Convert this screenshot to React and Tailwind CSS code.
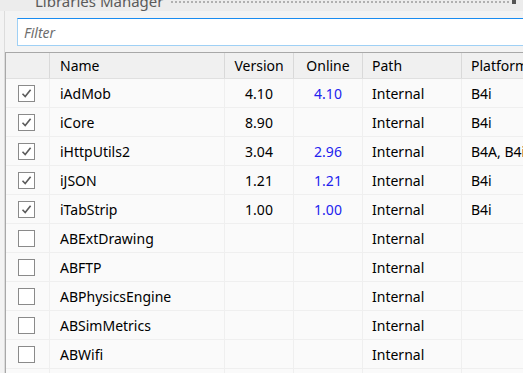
import React from "react";

const rows = [
  { checked: true, name: "iAdMob", version: "4.10", online: "4.10", path: "Internal", platform: "B4i" },
  { checked: true, name: "iCore", version: "8.90", online: "", path: "Internal", platform: "B4i" },
  { checked: true, name: "iHttpUtils2", version: "3.04", online: "2.96", path: "Internal", platform: "B4A, B4i" },
  { checked: true, name: "iJSON", version: "1.21", online: "1.21", path: "Internal", platform: "B4i" },
  { checked: true, name: "iTabStrip", version: "1.00", online: "1.00", path: "Internal", platform: "B4i" },
  { checked: false, name: "ABExtDrawing", version: "", online: "", path: "Internal", platform: "" },
  { checked: false, name: "ABFTP", version: "", online: "", path: "Internal", platform: "" },
  { checked: false, name: "ABPhysicsEngine", version: "", online: "", path: "Internal", platform: "" },
  { checked: false, name: "ABSimMetrics", version: "", online: "", path: "Internal", platform: "" },
  { checked: false, name: "ABWifi", version: "", online: "", path: "Internal", platform: "" },
];

const grid = "grid grid-cols-[44px_175px_69px_69px_99px_1fr]";

function CheckBox({ checked }) {
  return (
    <div className="w-[17px] h-[17px] border border-[#8a8a8a] bg-white flex items-center justify-center">
      {checked && (
        <svg width="13" height="13" viewBox="0 0 13 13">
          <path d="M2.5 6.8 L5.2 9.6 L10.6 2.8" fill="none" stroke="#5c5c5c" strokeWidth="1.6" />
        </svg>
      )}
    </div>
  );
}

export default function App() {
  return (
    <div
      className="w-[523px] h-[373px] overflow-hidden bg-[#f3f3f3] text-[14px] text-black"
      style={{ fontFamily: '"Noto Sans", "Open Sans", sans-serif' }}
    >
      {/* title strip */}
      <div className="h-[11px] bg-[#ececec] flex items-start overflow-hidden relative">
        <div className="ml-[35px] -mt-[9px] text-[#5a5a5a] text-[15px] leading-[20px] whitespace-nowrap">Libraries Manager</div>
        <div className="ml-[8px] mt-[1px] flex-1 border-t-2 border-dotted border-[#b0b0b0] mr-[14px]" />
        <div className="absolute right-[7px] top-0 w-[4px] h-[4px] bg-[#555]" />
      </div>
      {/* content */}
      <div className="ml-[4px] border-l border-[#dcdcdc] h-full">
        <div className="pt-[7px] pl-[12px]">
          <div className="h-[28px] bg-white border-t border-t-[#1a8cf0] border-b border-b-[#9fd0f5] border-l border-l-[#9fd0f5] flex items-center pl-[6px]">
            <span className="italic text-[#6d6d6d]">Filter</span>
          </div>
        </div>
        <div className="mt-[6px] border-l border-[#a8a8a8]">
          {/* header */}
          <div className={`${grid} h-[27px] bg-[#f0f0f0] border-t border-t-[#a8a8a8] border-b border-b-[#e0e0e0]`}>
            <div className="border-r border-[#d9d9d9]" />
            <div className="border-r border-[#d9d9d9] pl-[10px] flex items-center">Name</div>
            <div className="border-r border-[#d9d9d9] flex items-center justify-center">Version</div>
            <div className="border-r border-[#d9d9d9] flex items-center justify-center">Online</div>
            <div className="border-r border-[#d9d9d9] pl-[9px] flex items-center">Path</div>
            <div className="pl-[9px] flex items-center whitespace-nowrap overflow-hidden">Platform</div>
          </div>
          {rows.map((r) => (
            <div key={r.name} className={`${grid} h-[29px] bg-[#fafafa] border-b border-[#efefef]`}>
              <div className="border-r border-[#efefef] flex items-center pl-[12px]">
                <CheckBox checked={r.checked} />
              </div>
              <div className="border-r border-[#efefef] pl-[10px] flex items-center">{r.name}</div>
              <div className="border-r border-[#efefef] flex items-center justify-center">{r.version}</div>
              <div className="border-r border-[#efefef] flex items-center justify-center text-[#2222ee]">{r.online}</div>
              <div className="border-r border-[#efefef] pl-[9px] flex items-center">{r.path}</div>
              <div className="pl-[9px] flex items-center whitespace-nowrap overflow-hidden">{r.platform}</div>
            </div>
          ))}
          <div className={`${grid} h-[29px] bg-[#fafafa]`}>
            <div className="border-r border-[#efefef]" />
            <div className="border-r border-[#efefef]" />
            <div className="border-r border-[#efefef]" />
            <div className="border-r border-[#efefef]" />
            <div className="border-r border-[#efefef]" />
            <div />
          </div>
        </div>
      </div>
    </div>
  );
}
